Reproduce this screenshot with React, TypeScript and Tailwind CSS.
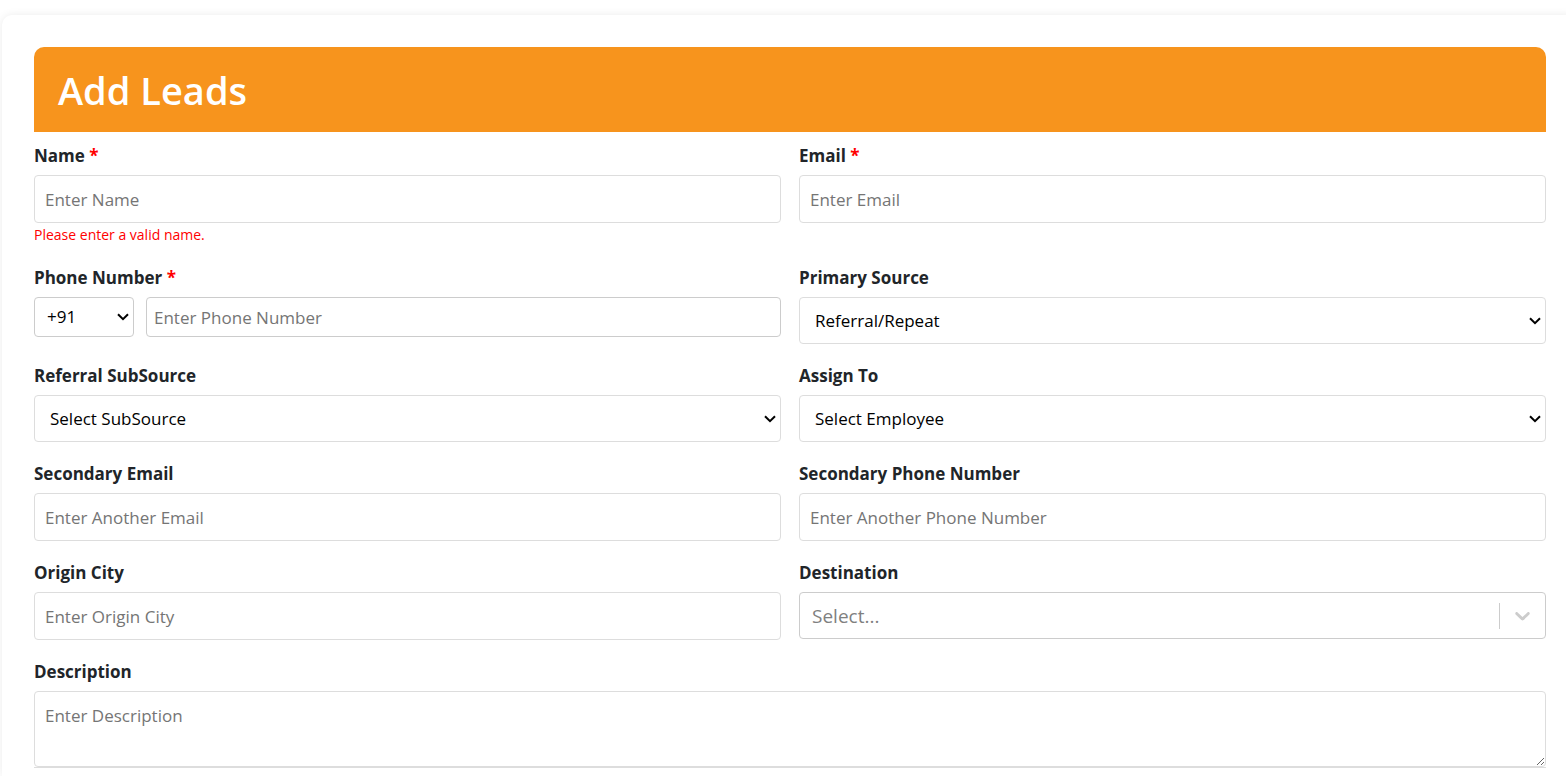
import type { ReactNode } from "react";

const inputClass =
  "block h-12 w-full rounded border border-[#dddddd] bg-white px-[10px] text-[17px] text-black placeholder:text-[#757575]";

type FieldProps = {
  id: string;
  label: string;
  required?: boolean;
  error?: string;
  className?: string;
  children: ReactNode;
};

function Field({ id, label, required, error, className, children }: FieldProps) {
  return (
    <div className={className}>
      <label htmlFor={id} className="mb-[7px] block text-[17px] leading-6 font-bold text-[#212529]">
        {label}
        {required && <span className="text-[#ff0000]"> *</span>}
      </label>
      {children}
      {error && <p className="text-sm leading-[23px] text-[#ff0000]">{error}</p>}
    </div>
  );
}

type SelectProps = { id: string; option: string; label?: string; compact?: boolean };

function Select({ id, option, label, compact }: SelectProps) {
  return (
    <div className={compact ? "relative w-[100px]" : "relative"}>
      <select
        id={id}
        aria-label={label}
        className={
          compact
            ? "block h-10 w-full appearance-none rounded border border-[#cccccc] bg-white px-3 text-[17px] text-black"
            : "block h-[47px] w-full appearance-none rounded border border-[#dddddd] bg-white px-[15px] text-[17px] text-black"
        }
      >
        <option>{option}</option>
      </select>
      <span className="pointer-events-none absolute inset-y-0 right-[5px] flex items-center">
        <svg viewBox="0 0 12 8" className="h-2 w-3 fill-none stroke-black stroke-2">
          <path d="M1 1.2 6 6.2 11 1.2" />
        </svg>
      </span>
    </div>
  );
}

export default function App() {
  return (
    <div className="flex min-h-screen flex-col overflow-hidden bg-white pt-[15px] pl-0.5 font-['Segoe_UI','Open_Sans',sans-serif]">
      <main className="-mr-3 flex-1 rounded-t-[10px] bg-white px-8 pt-8 shadow-[0_0_8px_rgba(0,0,0,0.08)]">
        <header className="rounded-t-[10px] bg-[#f7941d] px-6 pt-[19px] pb-[17px]">
          <h1 className="text-[38px] leading-[49px] font-semibold text-white">Add Leads</h1>
        </header>
        <form className="grid grid-cols-2 gap-x-[18px] gap-y-5 pt-3">
          <Field id="name" label="Name" required error="Please enter a valid name.">
            <input id="name" type="text" placeholder="Enter Name" className={inputClass} />
          </Field>
          <Field id="email" label="Email" required>
            <input id="email" type="email" placeholder="Enter Email" className={inputClass} />
          </Field>
          <Field id="phone" label="Phone Number" required>
            <div className="flex gap-3">
              <Select id="country-code" label="Country code" option="+91" compact />
              <input
                id="phone"
                type="tel"
                placeholder="Enter Phone Number"
                className="h-10 min-w-0 flex-1 rounded border border-[#cccccc] bg-white px-[7px] text-[17px] placeholder:text-[#757575]"
              />
            </div>
          </Field>
          <Field id="source" label="Primary Source">
            <Select id="source" option="Referral/Repeat" />
          </Field>
          <Field id="subsource" label="Referral SubSource">
            <Select id="subsource" option="Select SubSource" />
          </Field>
          <Field id="assignee" label="Assign To">
            <Select id="assignee" option="Select Employee" />
          </Field>
          <Field id="email2" label="Secondary Email">
            <input id="email2" type="email" placeholder="Enter Another Email" className={inputClass} />
          </Field>
          <Field id="phone2" label="Secondary Phone Number">
            <input id="phone2" type="tel" placeholder="Enter Another Phone Number" className={inputClass} />
          </Field>
          <Field id="origin" label="Origin City">
            <input id="origin" type="text" placeholder="Enter Origin City" className={inputClass} />
          </Field>
          <Field id="destination" label="Destination">
            <div className="flex h-[47px] items-center rounded border border-[#cccccc] bg-white">
              <input
                id="destination"
                role="combobox"
                aria-expanded="false"
                placeholder="Select..."
                className="h-full min-w-0 flex-1 pl-3 text-[19px] placeholder:text-[#808080]"
              />
              <span className="h-[26px] w-px bg-[#cccccc]" />
              <button type="button" aria-label="Show destinations" className="px-[10px] text-[#cccccc]">
                <svg viewBox="0 0 20 20" className="size-[25px] fill-current">
                  <path d="M4.516 7.548c0.436-0.446 1.043-0.481 1.576 0l3.908 3.747 3.908-3.747c0.533-0.481 1.141-0.446 1.574 0 0.436 0.445 0.408 1.197 0 1.615-0.406 0.418-4.695 4.502-4.695 4.502-0.217 0.223-0.502 0.335-0.787 0.335s-0.57-0.112-0.789-0.335c0 0-4.287-4.084-4.695-4.502s-0.436-1.17 0-1.615z" />
                </svg>
              </button>
            </div>
          </Field>
          <Field id="description" label="Description" className="col-span-2 border-b border-[#dddddd]">
            <textarea
              id="description"
              placeholder="Enter Description"
              className="block h-[76px] w-full rounded border border-[#dddddd] bg-white px-[10px] py-3 text-[17px] leading-6 placeholder:text-[#757575]"
            />
          </Field>
        </form>
      </main>
    </div>
  );
}
